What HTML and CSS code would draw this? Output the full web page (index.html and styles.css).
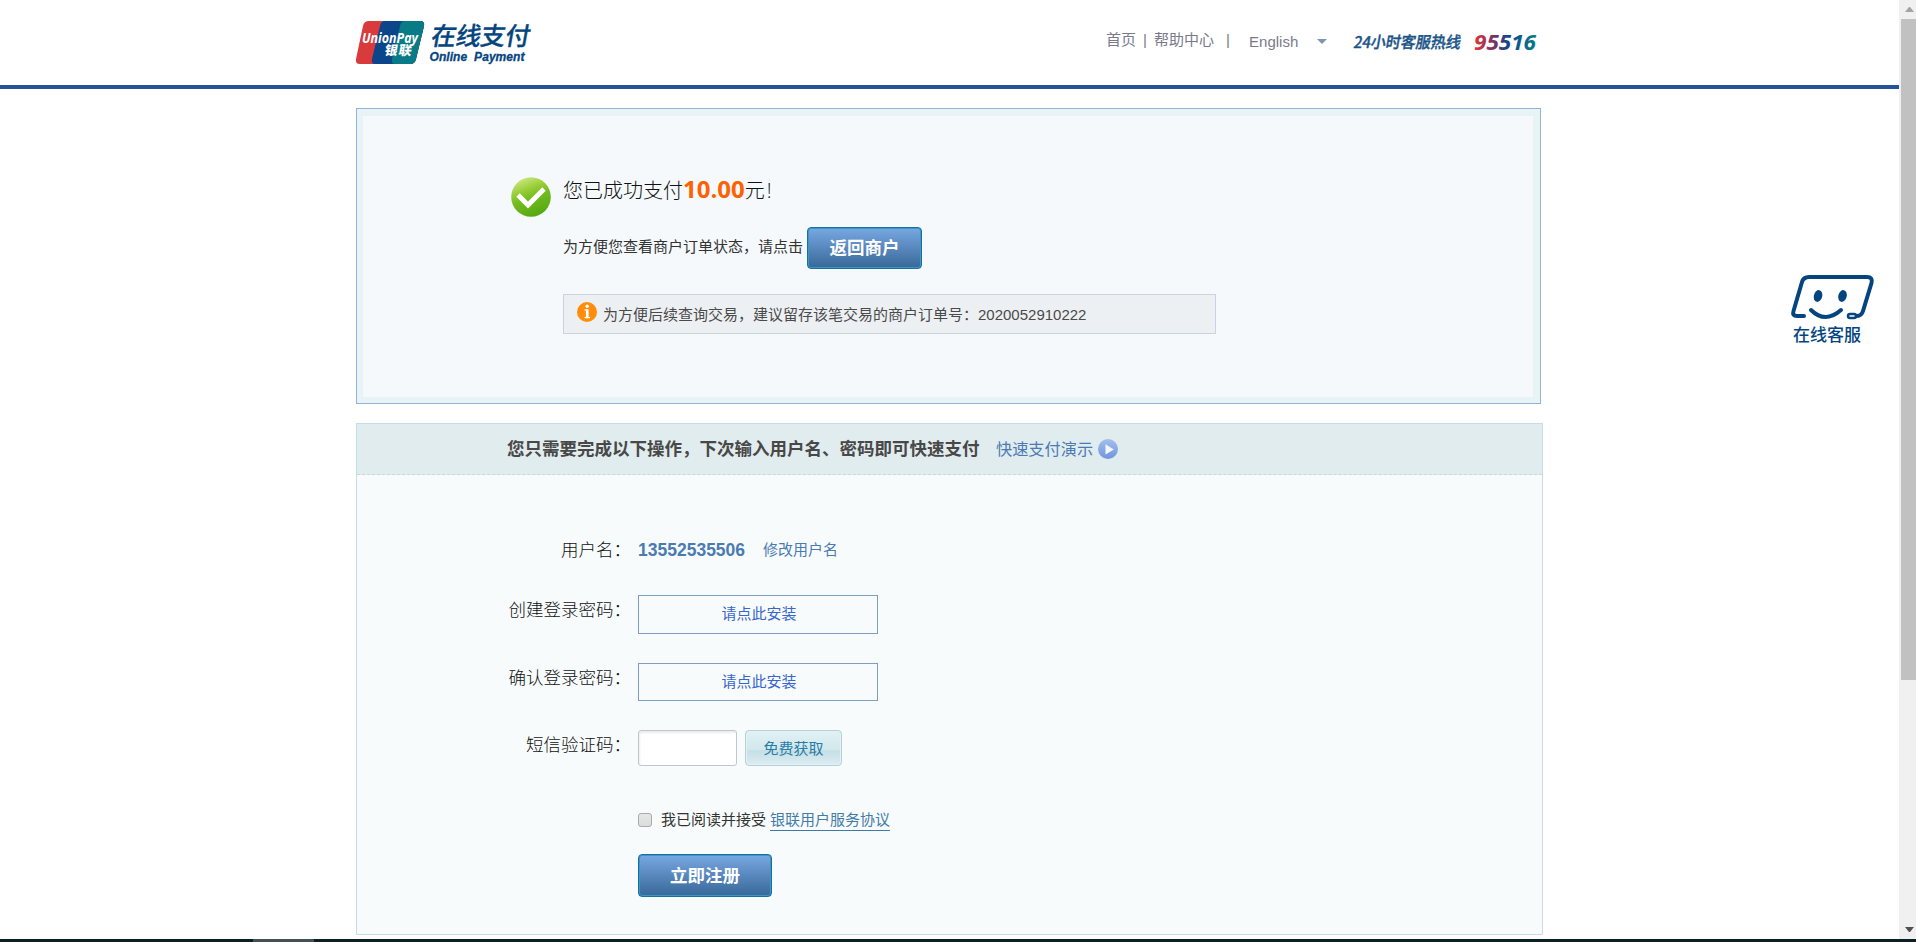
FILE: index.html
```
<!DOCTYPE html>
<html lang="zh-CN">
<head>
    <meta charset="UTF-8">
    <title>银联在线支付</title>
    <link rel="stylesheet" href="styles.css">
</head>
<body>
    <div class="window">
        <div class="page">
            <header class="header">
                <div class="container header-inner">
                    <svg class="logo" width="180" height="50" viewBox="0 0 180 50">
                        <defs>
                            <clipPath id="card">
                                <path d="M13 1H64Q69 1 68 6L60 39Q59 44 54 44H4Q-1 44 0 39L7 6Q8 1 13 1Z"/>
                            </clipPath>
                        </defs>
                        <g clip-path="url(#card)">
                            <rect width="70" height="45" fill="#d93a3c"/>
                            <path d="M29 1Q25 1 24 6L16 39Q15 44 19 44H70V1Z" fill="#0b468b"/>
                            <path d="M49 1Q45 1 44 6L36 39Q35 44 39 44H70V1Z" fill="#087b87"/>
                        </g>
                        <text x="6" y="22.5" class="logo-union" textLength="56" lengthAdjust="spacingAndGlyphs">UnionPay</text>
                        <text transform="translate(28 35) skewX(-10)" class="logo-yinlian" textLength="27">银联</text>
                        <text transform="translate(74 24.5) skewX(-10)" class="logo-cn" textLength="99">在线支付</text>
                        <text x="73.500" y="41" class="logo-en" textLength="95">Online&#160; Payment</text>
                    </svg>
                    <nav class="nav">
                        <a href="#">首页</a><span class="sep">|</span><a href="#">帮助中心</a><span class="sep sep-last">|</span>
                        <a href="#" class="lang">English</a><i class="caret"></i>
                    </nav>
                    <svg class="hotline" width="190" height="30" viewBox="0 0 190 30">
                        <defs>
                            <linearGradient id="hot" x1="0" x2="1" y1="0" y2="0">
                                <stop offset="0" stop-color="#e83239"/>
                                <stop offset=".28" stop-color="#84335f"/>
                                <stop offset=".55" stop-color="#10478c"/>
                                <stop offset="1" stop-color="#087d88"/>
                            </linearGradient>
                        </defs>
                        <text transform="translate(1 19.5) skewX(-10)" class="hot-cn" textLength="107" lengthAdjust="spacingAndGlyphs">24小时客服热线</text>
                        <text x="122" y="22" class="hot-num" fill="url(#hot)" textLength="62" lengthAdjust="spacingAndGlyphs">95516</text>
                    </svg>
                </div>
            </header>

            <section class="container result">
                <div class="result-inner">
                    <svg class="ok-icon" width="40" height="40" viewBox="0 0 40 40">
                        <defs>
                            <linearGradient id="ok" x1="0.2" x2="0.6" y1="0" y2="1">
                                <stop offset="0" stop-color="#d3ea8a"/>
                                <stop offset=".35" stop-color="#96cd35"/>
                                <stop offset=".55" stop-color="#74bb20"/>
                                <stop offset="1" stop-color="#54a811"/>
                            </linearGradient>
                        </defs>
                        <circle cx="20" cy="20" r="19.8" fill="url(#ok)"/>
                        <path d="M7 18L17 28L33 12" fill="none" stroke="#fff" stroke-width="4.8"/>
                    </svg>
                    <div class="result-body">
                        <p class="result-title">您已成功支付<b class="amount">10.00</b>元<span class="bang">!</span></p>
                        <div class="result-back">
                            <span>为方便您查看商户订单状态，请点击</span>
                            <button type="button" class="btn btn-back">返回商户</button>
                        </div>
                        <div class="tip">
                            <svg width="20" height="20" viewBox="0 0 20 20">
                                <circle cx="10" cy="10" r="10" fill="#ff8c0a"/>
                                <circle cx="10.2" cy="4.2" r="1.7" fill="#fff"/>
                                <path d="M7.5 7.2H11.6V15H13V16.2H7.5V15H8.9V8.4H7.5Z" fill="#fff"/>
                            </svg>
                            <span>为方便后续查询交易，建议留存该笔交易的商户订单号：2020052910222</span>
                        </div>
                    </div>
                </div>
            </section>

            <section class="container register">
                <div class="register-head">
                    <h2>您只需要完成以下操作，下次输入用户名、密码即可快速支付</h2>
                    <a href="#">快速支付演示</a>
                    <svg width="20" height="20" viewBox="0 0 20 20">
                        <defs>
                            <linearGradient id="play" x1="0" x2="0" y1="0" y2="1">
                                <stop offset="0" stop-color="#a3bfec"/>
                                <stop offset="1" stop-color="#7095df"/>
                            </linearGradient>
                        </defs>
                        <circle cx="10" cy="10" r="10" fill="url(#play)"/>
                        <path d="M7.5 5.2L15.8 10.5L7.5 15.5Z" fill="#f3f7fe"/>
                    </svg>
                </div>
                <form class="register-form">
                    <div class="row row-user">
                        <label>用户名：</label>
                        <b class="username">13552535506</b>
                        <a href="#" class="edit">修改用户名</a>
                    </div>
                    <div class="row row-pwd">
                        <label>创建登录密码：</label>
                        <a href="#" class="install">请点此安装</a>
                    </div>
                    <div class="row row-confirm">
                        <label>确认登录密码：</label>
                        <a href="#" class="install">请点此安装</a>
                    </div>
                    <div class="row row-sms">
                        <label>短信验证码：</label>
                        <input type="text" class="sms">
                        <button type="button" class="btn-sms">免费获取</button>
                    </div>
                    <div class="agree">
                        <input type="checkbox" class="check">
                        <span>我已阅读并接受</span>
                        <a href="#">银联用户服务协议</a>
                    </div>
                    <button type="button" class="btn btn-register">立即注册</button>
                </form>
            </section>

            <a href="#" class="service">
                <svg width="86" height="74" viewBox="0 0 86 74">
                    <g fill="none" stroke="#05457f" stroke-width="4" stroke-linecap="round" stroke-linejoin="round">
                        <path d="M14 43H7Q2 43 3.5 38L12 9Q13.500 4 19 4H77Q83 4 81.500 10L73 38Q71.500 43 67 43"/>
                        <path d="M21 37Q35 51 51 37"/>
                        <rect x="58" y="41" width="8" height="4" rx="2" stroke-width="2.500"/>
                    </g>
                    <ellipse cx="28" cy="23" rx="4.200" ry="6" transform="rotate(14 28 23)" fill="#05457f"/>
                    <ellipse cx="52.500" cy="23" rx="4.200" ry="6" transform="rotate(14 52.500 23)" fill="#05457f"/>
                    <text x="3" y="68" class="service-text" textLength="68">在线客服</text>
                </svg>
            </a>
        </div>
        <div class="scrollbar">
            <i class="arrow-up"></i>
            <div class="thumb"></div>
            <i class="arrow-down"></i>
        </div>
    </div>
    <div class="taskbar"><i></i></div>
</body>
</html>
```
FILE: styles.css
```
* {
    box-sizing: border-box;
}
body {
    margin: 0;
    height: 942px;
    overflow: hidden;
    display: flex;
    flex-direction: column;
    background: #fff;
    color: #333;
    font-family: "Liberation Sans", "Noto Sans CJK SC", sans-serif;
    font-size: 15px;
    line-height: 20px;
}
a {
    color: #4b7bb3;
    text-decoration: none;
}
p, h2 {
    margin: 0;
}
svg {
    display: block;
    flex: none;
    overflow: visible;
}
.window {
    display: flex;
    height: 939px;
}
.page {
    position: relative;
    flex: 1;
}
.container {
    width: 1187px;
    margin: 0 auto;
}

/* header */
.header {
    height: 89px;
    border-bottom: 4px solid #25529a;
}
.header-inner {
    display: flex;
    align-items: flex-start;
}
.logo {
    margin-top: 20px;
}
.logo-union {
    font: italic bold 14px "Open Sans", sans-serif;
    fill: #fff;
}
.logo-yinlian {
    font: 900 13px "Noto Sans CJK SC", sans-serif;
    fill: #fff;
}
.logo-cn {
    font: 500 25px "Noto Sans CJK SC", sans-serif;
    fill: #05457f;
    stroke: #05457f;
    stroke-width: .3px;
}
.logo-en {
    font: italic bold 12px "Liberation Sans", sans-serif;
    fill: #05457f;
    stroke: #05457f;
    stroke-width: .3px;
}
.nav {
    display: flex;
    margin: 30px 0 0 570px;
    width: 246px;
}
.nav a, .sep {
    color: #7a7a8c;
}
.sep {
    width: 18px;
    text-align: center;
}
.sep-last {
    margin-left: 5px;
}
.nav .lang {
    margin: 2px 0 0 12px;
}
.caret {
    margin: 9px 0 0 19px;
    border: 5px solid transparent;
    border-top-color: #7e95ad;
    border-bottom: 0;
    height: 5px;
}
.hotline {
    margin-top: 28px;
    margin-right: -9px;
}
.hot-cn {
    font: 500 16px "Noto Sans CJK SC", sans-serif;
    fill: #1c5489;
    stroke: #1c5489;
    stroke-width: .4px;
}
.hot-num {
    font: italic bold 22px "Open Sans", sans-serif;
}

/* payment result */
.result {
    height: 296px;
    margin-top: 19px;
    padding: 7px 7px 6px 6px;
    width: 1185px;
    margin-left: 356px;
    border: 1px solid #95b3d7;
    background: #e8f3f5;
}
.result-inner {
    display: flex;
    height: 281px;
    padding-left: 148px;
    background: #f5f9fc;
}
.ok-icon {
    margin-top: 61px;
}
.result-body {
    margin: 58px 0 0 12px;
}
.result-title {
    font-size: 20px;
    line-height: 30px;
    height: 30px;
    font-weight: 300;
    color: #111;
}
.amount {
    font-family: "Open Sans", sans-serif;
    font-size: 24px;
    font-weight: 700;
    color: #ff6000;
}
.bang {
    margin-left: 2px;
    font-family: "Open Sans", sans-serif;
}
.result-back {
    display: flex;
    align-items: flex-start;
    margin-top: 23px;
}
.result-back span {
    width: 244px;
    margin-top: 10px;
}
.btn {
    height: 42px;
    padding: 0 0 3px;
    border: 1px solid #1770a0;
    border-radius: 4px;
    background: linear-gradient(#78a8e2, #386798);
    box-shadow: inset 0 0 0 1px #3d96c4;
    color: #fff;
    font: bold 17.5px "Noto Sans CJK SC", sans-serif;
}
.btn-back {
    width: 115px;
}
.tip {
    display: flex;
    align-items: flex-start;
    width: 653px;
    height: 40px;
    margin-top: 25px;
    padding: 7px 13px;
    border: 1px solid #c8d4e0;
    background: #edf0f3;
    color: #4a4a4a;
}
.tip span {
    margin: 3px 0 0 6px;
}

/* quick register */
.register {
    height: 512px;
    margin-top: 19px;
    border: 1px solid #cadae6;
    background: #f7fbfc;
}
.register-head {
    display: flex;
    align-items: center;
    height: 51px;
    padding-left: 150px;
    border-bottom: 1px dashed #c6d8e0;
    background: #e1ecee;
}
.register-head h2 {
    width: 489px;
    font-size: 17.5px;
    color: #484848;
}
.register-head a {
    width: 102px;
    font-size: 16.2px;
}
.row {
    display: flex;
    align-items: flex-start;
}
.row label {
    width: 274px;
    margin-right: 7px;
    text-align: right;
    font-size: 17.5px;
    line-height: 26px;
    font-weight: 300;
    color: #111;
}
.row-user {
    padding-top: 62px;
    height: 120px;
}
.username {
    width: 125px;
    font-size: 17.5px;
    line-height: 26px;
    color: #4b7bb3;
}
.edit {
    line-height: 26px;
}
.row label + .install {
    width: 240px;
    height: 39px;
    padding-left: 2px;
    border: 1px solid #7f9dbe;
    line-height: 35px;
    text-align: center;
    color: #3a66cc;
}
.row-pwd label,
.row-confirm label {
    margin-top: 2px;
}
.row-pwd {
    height: 68px;
}
.row-confirm {
    height: 67px;
}
.row-confirm label + .install {
    height: 38px;
}
.row-sms {
    height: 83px;
}
.row-sms label {
    margin-top: 2px;
}
.sms {
    width: 99px;
    height: 36px;
    border: 1px solid #c0c6ce;
    border-radius: 3px;
    background: #fff;
    box-shadow: inset 1px 2px 2px #ececec;
}
.btn-sms {
    width: 97px;
    height: 36px;
    margin-left: 8px;
    padding: 0 0 2px;
    border: 1px solid #b4cfd5;
    border-radius: 4px;
    background: linear-gradient(#dff1f4, #d3e8eb 55%, #c5dfe5 58%, #dcecf3);
    box-shadow: inset 0 0 0 1px #e3f2f4;
    color: #287da8;
    font: 15px "Noto Sans CJK SC", sans-serif;
}
.agree {
    display: flex;
    height: 41px;
    margin-left: 281px;
}
.agree span {
    margin: -3px 4px 0 9px;
}
.agree a {
    height: 21px;
    margin-top: -3px;
    border-bottom: 1px solid #3f7aa6;
    color: #447ba8;
}
.check {
    appearance: none;
    width: 14px;
    height: 14px;
    margin: 0;
    border: 1px solid #aaa;
    border-radius: 3px;
    background: linear-gradient(#e6e6e6, #dcdcdc);
}
.btn-register {
    width: 134px;
    height: 43px;
    margin-left: 281px;
}

.service {
    position: absolute;
    right: 23px;
    top: 273px;
}
.service-text {
    font: 500 17px "Noto Sans CJK SC", sans-serif;
    fill: #05457f;
}

/* window edges */
.scrollbar {
    width: 17px;
    padding-left: 2px;
    background: #f0f0f0;
    display: flex;
    flex-direction: column;
}
.arrow-up, .arrow-down {
    width: 9px;
    border: 4.5px solid transparent;
}
.arrow-up {
    border-top: 0;
    border-bottom: 5px solid #a3a3a3;
    margin: 7px 0 7px 4px;
}
.thumb {
    height: 661px;
    background: #c1c1c1;
}
.arrow-down {
    border-bottom: 0;
    border-top: 5px solid #505050;
    margin: auto 0 7px 4px;
}
.taskbar {
    height: 3px;
    background: #0b1f27;
}
.taskbar i {
    display: block;
    width: 61px;
    height: 3px;
    margin-left: 253px;
    background: #435055;
}
```
